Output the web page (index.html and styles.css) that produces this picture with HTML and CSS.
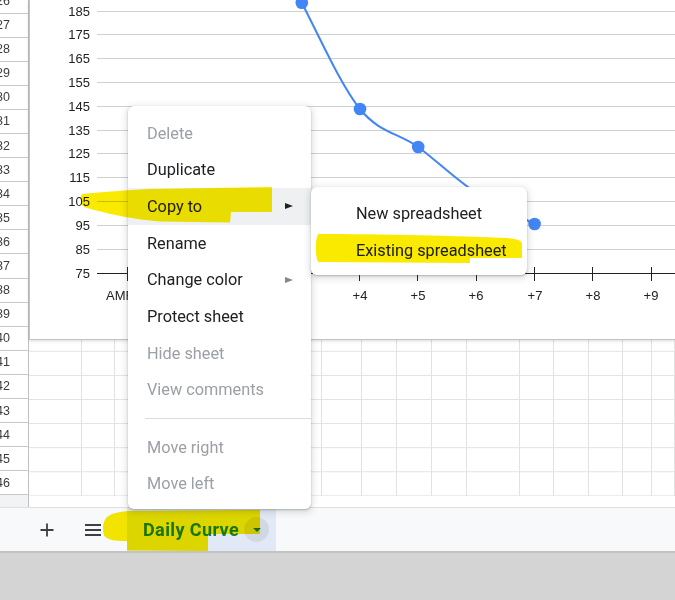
FILE: index.html
```html
<!DOCTYPE html>
<html lang="en">
<head>
    <meta charset="UTF-8">
    <meta name="viewport" content="width=device-width, initial-scale=1.0">
    <title>Daily Curve - Sheet menu</title>
    <link rel="stylesheet" href="styles.css">
</head>
<body>
    <div class="sheet">
        <div class="rowheads">
            <div class="rh">26</div>
            <div class="rh">27</div>
            <div class="rh">28</div>
            <div class="rh">29</div>
            <div class="rh">30</div>
            <div class="rh">31</div>
            <div class="rh">32</div>
            <div class="rh">33</div>
            <div class="rh">34</div>
            <div class="rh">35</div>
            <div class="rh">36</div>
            <div class="rh">37</div>
            <div class="rh">38</div>
            <div class="rh">39</div>
            <div class="rh">40</div>
            <div class="rh">41</div>
            <div class="rh">42</div>
            <div class="rh">43</div>
            <div class="rh">44</div>
            <div class="rh">45</div>
            <div class="rh">46</div>
            <div class="rh-tail"></div>
        </div>
        <div class="grid-area">
            <div class="cells">
                <div class="col"></div><div class="col"></div><div class="col"></div><div class="col"></div>
                <div class="col"></div><div class="col"></div><div class="col"></div><div class="col"></div>
                <div class="col"></div><div class="col"></div><div class="col"></div><div class="col"></div>
                <div class="col"></div><div class="col"></div>
            </div>
            <div class="strip"></div>
        </div>
    </div>

    <div class="tabbar">
        <div class="tb-btn">
            <svg width="14" height="14" viewBox="0 0 14 14"><path d="M7 0.5v13M0.5 7h13" stroke="#3c4043" stroke-width="1.8" fill="none"/></svg>
        </div>
        <div class="tb-btn">
            <svg width="18" height="12" viewBox="0 0 18 12"><path d="M1 1h16M1 6h16M1 11h16" stroke="#3c4043" stroke-width="1.8" fill="none"/></svg>
        </div>
        <div class="tab">
            <span class="tab-name">Daily Curve</span>
            <span class="tab-drop"></span>
        </div>
    </div>
    <div class="footer"></div>

    <!-- floating chart over the sheet -->
    <div class="chart">
        <svg class="plot" width="645" height="339" viewBox="30 0 645 339">
            <g stroke="#d0d0d0" stroke-width="1">
                <line x1="97" x2="675" y1="11.5" y2="11.5"/>
                <line x1="97" x2="675" y1="34.5" y2="34.5"/>
                <line x1="97" x2="675" y1="58.5" y2="58.5"/>
                <line x1="97" x2="675" y1="82.5" y2="82.5"/>
                <line x1="97" x2="675" y1="106.5" y2="106.5"/>
                <line x1="97" x2="675" y1="130.5" y2="130.5"/>
                <line x1="97" x2="675" y1="153.5" y2="153.5"/>
                <line x1="97" x2="675" y1="177.5" y2="177.5"/>
                <line x1="97" x2="675" y1="201.5" y2="201.5"/>
                <line x1="97" x2="675" y1="225.5" y2="225.5"/>
                <line x1="97" x2="675" y1="249.5" y2="249.5"/>
            </g>
            <g class="ylab" text-anchor="end">
                <text x="90" y="16">185</text>
                <text x="90" y="39">175</text>
                <text x="90" y="63">165</text>
                <text x="90" y="87">155</text>
                <text x="90" y="111">145</text>
                <text x="90" y="135">135</text>
                <text x="90" y="158">125</text>
                <text x="90" y="182">115</text>
                <text x="90" y="206">105</text>
                <text x="90" y="230">95</text>
                <text x="90" y="254">85</text>
                <text x="90" y="278">75</text>
            </g>
            <g stroke="#222" stroke-width="1">
                <line x1="97" x2="675" y1="273.5" y2="273.5"/>
                <line x1="127.5" x2="127.5" y1="267" y2="281"/>
                <line x1="185.5" x2="185.5" y1="267" y2="281"/>
                <line x1="243.5" x2="243.5" y1="267" y2="281"/>
                <line x1="301.5" x2="301.5" y1="267" y2="281"/>
                <line x1="359.5" x2="359.5" y1="267" y2="281"/>
                <line x1="417.5" x2="417.5" y1="267" y2="281"/>
                <line x1="476.5" x2="476.5" y1="267" y2="281"/>
                <line x1="534.5" x2="534.5" y1="267" y2="281"/>
                <line x1="592.5" x2="592.5" y1="267" y2="281"/>
                <line x1="651.5" x2="651.5" y1="267" y2="281"/>
            </g>
            <g class="xlab" text-anchor="middle">
                <text x="127" y="300" text-anchor="start" dx="-21">AMFS</text>
                <text x="185" y="300">+1</text>
                <text x="243" y="300">+2</text>
                <text x="302" y="300">+3</text>
                <text x="360" y="300">+4</text>
                <text x="418" y="300">+5</text>
                <text x="476" y="300">+6</text>
                <text x="535" y="300">+7</text>
                <text x="593" y="300">+8</text>
                <text x="651" y="300">+9</text>
            </g>
            <path d="M287 -29 L301.8 2.7 C320 38 340.7 85 360 109 C379.3 133 398.4 133 418.2 147 C437 161 456.5 180.2 476.4 193 C495.5 205.8 524.9 218.8 534.6 224"
                  fill="none" stroke="#4285f4" stroke-width="2"/>
            <g fill="#4285f4">
                <circle cx="301.8" cy="2.7" r="6.3"/>
                <circle cx="360" cy="109" r="6.3"/>
                <circle cx="418.2" cy="147" r="6.3"/>
                <circle cx="476.4" cy="194" r="6.3"/>
                <circle cx="534.6" cy="224" r="6.3"/>
            </g>
        </svg>
    </div>

    <!-- sheet tab context menu -->
    <div class="menu">
        <div class="mi off">Delete</div>
        <div class="mi">Duplicate</div>
        <div class="mi sub on">Copy to</div>
        <div class="mi">Rename</div>
        <div class="mi sub">Change color</div>
        <div class="mi">Protect sheet</div>
        <div class="mi off">Hide sheet</div>
        <div class="mi off">View comments</div>
        <div class="sep"></div>
        <div class="mi off">Move right</div>
        <div class="mi off">Move left</div>
    </div>

    <div class="submenu">
        <div class="si">New spreadsheet</div>
        <div class="si">Existing spreadsheet</div>
    </div>

    <!-- highlighter marks -->
    <svg class="marker" width="675" height="600" viewBox="0 0 675 600">
        <path d="M82 194 C105 192 125 190 150 189 L272 187 L272 212 L231 212 L230 222.5 L160 221.5 C130 219 100 212 84 207 C80 204 80 196 82 194 Z"/>
        <path d="M318 234 C380 234 460 236 508 238 C516 239 522 240 522 244 L522 258 L470 258 L470 263 L318 262 C315 255 315 240 318 234 Z"/>
        <path d="M127 511 L260 510 L260 534 L208 534 L208 551 L127 550.5 L127 541 C115 541 106 540 104 535 C102 528 103 521 107 517 C112 513 120 512 127 511 Z"/>
    </svg>
</body>
</html>
```

FILE: styles.css
```css
body {
    margin: 0;
    width: 675px;
    height: 600px;
    overflow: hidden;
    position: relative;
    background: #fff;
    font-family: Roboto, "Liberation Sans", Arial, sans-serif;
}
.sheet {
    display: flex;
    height: 507px;
    overflow: hidden;
}
.rowheads {
    width: 29px;
    flex: none;
    display: flex;
    flex-direction: column;
    box-sizing: border-box;
    border-right: 1px solid #c0c0c0;
    background: #fff;
}
.rh {
    height: 24.1px;
    flex: none;
    box-sizing: border-box;
    border-bottom: 1px solid #c8c8c8;
    display: flex;
    justify-content: flex-end;
    align-items: center;
    padding-right: 18px;
    font-family: "Liberation Sans", Arial, sans-serif;
    font-size: 12.5px;
    color: #3c3c3c;
}
.rh:first-child {
    margin-top: -10.6px;
}
.rh-tail {
    flex: 1;
    background: #f1f3f4;
}
.grid-area {
    flex: 1;
    display: flex;
    flex-direction: column;
}
.cells {
    height: 496px;
    display: grid;
    grid-template-columns: 53px 33px 103px 104px 40px 35px 35px 35px 53px 34px 35px 34px 29px 1fr;
}
.col {
    border-right: 1px solid #e2e2e2;
    background-image: linear-gradient(#e2e2e2 1px, transparent 1px);
    background-size: 100% 24.1px;
    background-position: 0 13.5px;
}
.strip {
    flex: 1;
    background: #fff;
}
.tabbar {
    height: 43px;
    border-top: 1px solid #e0e0e0;
    border-bottom: 2px solid #c2c2c2;
    background: #f8f9fa;
    display: flex;
    align-items: stretch;
    padding-left: 29px;
    gap: 10px;
}
.tb-btn {
    width: 36px;
    display: flex;
    align-items: center;
    justify-content: center;
}
.tab {
    margin-left: 6px;
    width: 149px;
    box-sizing: border-box;
    padding: 0 7px 0 16px;
    display: flex;
    align-items: center;
    background: #e2e9f6;
}
.tab-name {
    font-size: 18px;
    font-weight: bold;
    color: #188038;
    letter-spacing: 0.4px;
}
.tab-drop {
    margin-left: auto;
    width: 25px;
    height: 25px;
    border-radius: 50%;
    background: rgba(60, 64, 67, 0.1);
    display: flex;
    align-items: center;
    justify-content: center;
}
.tab-drop::after {
    content: "";
    border-top: 4.5px solid #1a73e8;
    border-left: 4px solid transparent;
    border-right: 4px solid transparent;
}
.footer {
    height: 47px;
    background: #d4d4d4;
}
.chart {
    position: absolute;
    left: 29px;
    top: 0;
    width: 646px;
    height: 340px;
    box-sizing: border-box;
    border-left: 1px solid #c4c4c4;
    border-bottom: 1px solid #c4c4c4;
    background: #fff;
    box-shadow: 0 1px 3px rgba(0, 0, 0, 0.15);
}
.plot {
    display: block;
    overflow: hidden;
}
.ylab, .xlab {
    font-family: "Liberation Sans", Arial, sans-serif;
    font-size: 13px;
    fill: #222;
}
.menu, .submenu {
    position: absolute;
    background: #fff;
    border-radius: 6px;
    box-shadow: 0 2px 6px 2px rgba(60, 64, 67, 0.15), 0 1px 2px rgba(60, 64, 67, 0.3);
}
.menu {
    left: 128px;
    top: 106px;
    width: 183px;
    padding: 8.7px 0 6.4px;
}
.mi {
    height: 36.7px;
    display: flex;
    align-items: center;
    padding: 0 18px 0 19px;
    font-size: 16.3px;
    color: #202124;
}
.mi.off {
    color: #9aa0a6;
}
.mi.on {
    background: #eef0f2;
}
.mi.sub::after {
    content: "";
    margin-left: auto;
    border-left: 8px solid #80868b;
    border-top: 3.5px solid transparent;
    border-bottom: 3.5px solid transparent;
}
.mi.on::after {
    border-left-color: #202124;
}
.sep {
    height: 1px;
    background: #dadce0;
    margin: 9.8px 0 9.8px 17px;
}
.submenu {
    left: 311px;
    top: 187px;
    width: 216px;
    padding: 7.5px 0 6.5px;
}
.si {
    height: 37px;
    display: flex;
    align-items: center;
    padding-left: 45px;
    font-size: 16.3px;
    color: #202124;
}
.marker {
    position: absolute;
    left: 0;
    top: 0;
    fill: #f9ea00;
    mix-blend-mode: multiply;
    pointer-events: none;
}
```
